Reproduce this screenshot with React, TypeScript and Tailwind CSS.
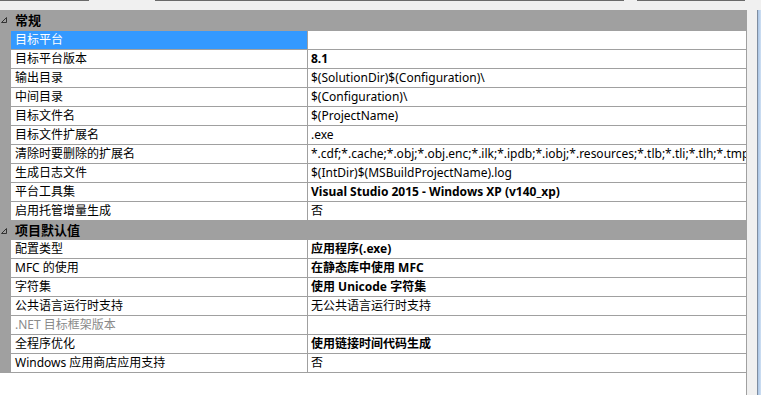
import React from "react";

type Row = {
  label: string;
  value: string;
  bold?: boolean;
  selected?: boolean;
  disabled?: boolean;
};

const general: Row[] = [
  { label: "目标平台", value: "", selected: true },
  { label: "目标平台版本", value: "8.1", bold: true },
  { label: "输出目录", value: "$(SolutionDir)$(Configuration)\\" },
  { label: "中间目录", value: "$(Configuration)\\" },
  { label: "目标文件名", value: "$(ProjectName)" },
  { label: "目标文件扩展名", value: ".exe" },
  {
    label: "清除时要删除的扩展名",
    value:
      "*.cdf;*.cache;*.obj;*.obj.enc;*.ilk;*.ipdb;*.iobj;*.resources;*.tlb;*.tli;*.tlh;*.tmp;*.rsp;*.pgc;*.pgd;*.meta",
  },
  { label: "生成日志文件", value: "$(IntDir)$(MSBuildProjectName).log" },
  { label: "平台工具集", value: "Visual Studio 2015 - Windows XP (v140_xp)", bold: true },
  { label: "启用托管增量生成", value: "否" },
];

const defaults: Row[] = [
  { label: "配置类型", value: "应用程序(.exe)", bold: true },
  { label: "MFC 的使用", value: "在静态库中使用 MFC", bold: true },
  { label: "字符集", value: "使用 Unicode 字符集", bold: true },
  { label: "公共语言运行时支持", value: "无公共语言运行时支持" },
  { label: ".NET 目标框架版本", value: "", disabled: true },
  { label: "全程序优化", value: "使用链接时间代码生成", bold: true },
  { label: "Windows 应用商店应用支持", value: "否" },
];

function Arrow() {
  return (
    <svg width="6" height="6" viewBox="0 0 6 6" className="absolute left-[1px] top-[7px]">
      <path d="M5.5 0.5 L5.5 5.5 L0.5 5.5 Z" fill="none" stroke="#333" strokeWidth="1" />
    </svg>
  );
}

function Header({ title, h }: { title: string; h: string }) {
  return (
    <div className={`relative flex items-center bg-[#a0a0a0] ${h}`}>
      <Arrow />
      <span className="pl-[15px] text-[13px] font-bold text-black">{title}</span>
    </div>
  );
}

function PropRow({ row }: { row: Row }) {
  return (
    <div className="flex h-[19px]">
      <div className="w-[11px] shrink-0 bg-[#a0a0a0]" />
      <div
        className={`flex w-[297px] shrink-0 items-center border-b border-r border-[#a0a0a0] pl-[4px] ${
          row.selected ? "bg-[#3399ff] text-white" : row.disabled ? "bg-white text-[#8a8a8a]" : "bg-white text-black"
        }`}
      >
        <span className="whitespace-nowrap">{row.label}</span>
      </div>
      <div className="flex min-w-0 flex-1 items-center overflow-hidden border-b border-[#a0a0a0] bg-white pl-[3px]">
        <span className={`whitespace-nowrap ${row.bold ? "font-bold" : ""}`}>{row.value}</span>
      </div>
    </div>
  );
}

export default function App() {
  return (
    <div
      className="flex h-[395px] w-[761px] flex-col overflow-hidden bg-[#f0f0f0] text-[12px] leading-none"
      style={{ fontFamily: '"Noto Sans", "Noto Sans CJK SC", sans-serif' }}
    >
      <div className="relative h-[10px] shrink-0">
        <div className="absolute left-0 top-0 h-px w-[89px] bg-[#6a6a6a]" />
        <div className="absolute left-[155px] top-0 h-px w-[469px] bg-[#6a6a6a]" />
        <div className="absolute left-[637px] top-0 h-px w-[108px] bg-[#6a6a6a]" />
      </div>
      <div className="flex flex-1">
        <div className="flex w-[747px] flex-col border-r border-[#a0a0a0] bg-white">
          <Header title="常规" h="h-[21px]" />
          {general.map((r) => (
            <PropRow key={r.label} row={r} />
          ))}
          <Header title="项目默认值" h="h-[19px]" />
          {defaults.map((r) => (
            <PropRow key={r.label} row={r} />
          ))}
        </div>
        <div className="w-[10px] bg-[#f0f0f0]" />
        <div className="w-[4px] border-l border-[#7f8da0] bg-gradient-to-r from-[#a9c4e4] to-[#cfe0f3]" />
      </div>
    </div>
  );
}
